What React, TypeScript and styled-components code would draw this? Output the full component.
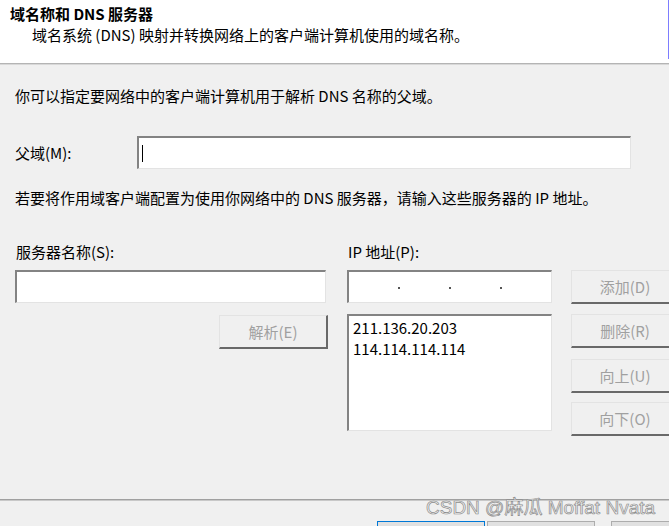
import React from 'react';
import styled, { createGlobalStyle } from 'styled-components';

const GlobalStyle = createGlobalStyle`
  html, body {
    margin: 0;
    padding: 0;
    background: #f0f0f0;
  }
  body {
    font-family: "Noto Sans CJK SC", "Noto Sans", sans-serif;
    font-size: 15px;
    color: #000;
  }
`;

const Window = styled.div`
  position: relative;
  width: 669px;
  height: 526px;
  overflow: hidden;
  background: #f0f0f0;
  display: flex;
  flex-direction: column;
`;

const Header = styled.div`
  height: 64px;
  background: #fff;
  border-bottom: 1px solid #b4b4b4;
  box-shadow: 0 1px 0 #d8d8d8;
  box-sizing: border-box;
`;

const HeaderInner = styled.div`
  height: 59px;
  border-right: 1px solid #7d7dff;
  padding: 4px 0 0 10px;
  box-sizing: border-box;
`;

const Title = styled.div`
  font-weight: bold;
  line-height: 20px;
`;

const Subtitle = styled.div`
  margin-top: 1px;
  padding-left: 22px;
  line-height: 20px;
`;

const Body = styled.div`
  flex: 1;
  padding: 0 15px;
  display: flex;
  flex-direction: column;
`;

const Text = styled.div<{ $top: number }>`
  margin-top: ${(p) => p.$top}px;
  line-height: 20px;
  white-space: nowrap;
`;

const FieldRow = styled.div`
  margin-top: 30px;
  display: flex;
  align-items: center;
`;

const RowLabel = styled.label`
  width: 122px;
  line-height: 20px;
`;

const Input = styled.div<{ $width: number }>`
  width: ${(p) => p.$width}px;
  height: 33px;
  box-sizing: border-box;
  background: #fff;
  border-top: 2px solid #838383;
  border-left: 2px solid #838383;
  border-right: 1px solid #e3e3e3;
  border-bottom: 1px solid #e3e3e3;
  display: flex;
  align-items: center;
`;

const Caret = styled.span`
  width: 1px;
  height: 17px;
  margin-left: 3px;
  background: #000;
`;

const Columns = styled.div`
  margin-top: 34px;
  display: flex;
  align-items: flex-start;
`;

const Column = styled.div<{ $width: number; $gap: number }>`
  width: ${(p) => p.$width}px;
  margin-right: ${(p) => p.$gap}px;
  display: flex;
  flex-direction: column;
  flex-shrink: 0;
`;

const ColLabel = styled.div`
  line-height: 20px;
  height: 28px;
  padding-left: 1px;
`;

const Button = styled.button<{ $top?: number }>`
  width: 109px;
  height: 34px;
  margin-top: ${(p) => p.$top ?? 0}px;
  box-sizing: border-box;
  flex-shrink: 0;
  background: #f0f0f0;
  border-top: 1px solid #e3e3e3;
  border-left: 1px solid #e3e3e3;
  border-right: 2px solid #696969;
  border-bottom: 2px solid #696969;
  color: #a0a0a0;
  font-family: "Noto Sans CJK SC", "Noto Sans", sans-serif;
  font-size: 15px;
  padding: 0;
  cursor: default;
`;

const ResolveButton = styled(Button)`
  align-self: flex-end;
  margin-right: -2px;
`;

const IpField = styled(Input)`
  padding-left: 0;
`;

const Octet = styled.span`
  width: 50px;
`;

const Dot = styled.span`
  width: 2px;
  height: 2px;
  margin-top: 1px;
  background: #555;
`;

const List = styled.div`
  margin-top: 11px;
  height: 117px;
  box-sizing: border-box;
  background: #fff;
  border-top: 2px solid #838383;
  border-left: 2px solid #838383;
  border-right: 1px solid #e3e3e3;
  border-bottom: 1px solid #e3e3e3;
  padding: 1px 0 0 4px;
`;

const ListItem = styled.div`
  line-height: 21px;
  font-size: 15px;
`;

const Footer = styled.div`
  height: 27px;
  border-top: 1px solid #a0a0a0;
  box-shadow: inset 0 1px 0 #c8c8c8;
  display: flex;
  align-items: flex-start;
  padding: 21px 0 0 377px;
  box-sizing: border-box;
`;

const FooterButton = styled.div<{ $primary?: boolean; $gap: number }>`
  width: 108px;
  height: 30px;
  flex-shrink: 0;
  margin-right: ${(p) => p.$gap}px;
  box-sizing: border-box;
  border: 1px solid ${(p) => (p.$primary ? '#0078d7' : '#adadad')};
  background: #e1e1e1;
`;

const Watermark = styled.div`
  position: absolute;
  left: 426px;
  top: 496px;
  font-family: "Liberation Sans", "Noto Sans CJK SC", sans-serif;
  font-size: 19px;
  line-height: 24px;
  color: #f4f4f4;
  -webkit-text-stroke: 0.7px #8c8c8c;
  white-space: nowrap;
`;

export default function App() {
  return (
    <Window>
      <GlobalStyle />
      <Header>
        <HeaderInner>
          <Title>域名称和 DNS 服务器</Title>
          <Subtitle>域名系统 (DNS) 映射并转换网络上的客户端计算机使用的域名称。</Subtitle>
        </HeaderInner>
      </Header>
      <Body>
        <Text $top={22}>你可以指定要网络中的客户端计算机用于解析 DNS 名称的父域。</Text>
        <FieldRow>
          <RowLabel>父域(M):</RowLabel>
          <Input $width={494}>
            <Caret />
          </Input>
        </FieldRow>
        <Text $top={19}>若要将作用域客户端配置为使用你网络中的 DNS 服务器，请输入这些服务器的 IP 地址。</Text>
        <Columns>
          <Column $width={311} $gap={21}>
            <ColLabel>服务器名称(S):</ColLabel>
            <Input $width={311} />
            <ResolveButton $top={12}>解析(E)</ResolveButton>
          </Column>
          <Column $width={205} $gap={19}>
            <ColLabel>IP 地址(P):</ColLabel>
            <IpField $width={205}>
              <Octet />
              <Dot />
              <Octet />
              <Dot />
              <Octet />
              <Dot />
              <Octet />
            </IpField>
            <List>
              <ListItem>211.136.20.203</ListItem>
              <ListItem>114.114.114.114</ListItem>
            </List>
          </Column>
          <Column $width={109} $gap={0}>
            <ColLabel />
            <Button>添加(D)</Button>
            <Button $top={10}>删除(R)</Button>
            <Button $top={11}>向上(U)</Button>
            <Button $top={9}>向下(O)</Button>
          </Column>
        </Columns>
      </Body>
      <Footer>
        <FooterButton $primary $gap={2} />
        <FooterButton $gap={16} />
        <FooterButton $gap={0} />
      </Footer>
      <Watermark>CSDN @麻瓜 Moffat Nvata</Watermark>
    </Window>
  );
}
